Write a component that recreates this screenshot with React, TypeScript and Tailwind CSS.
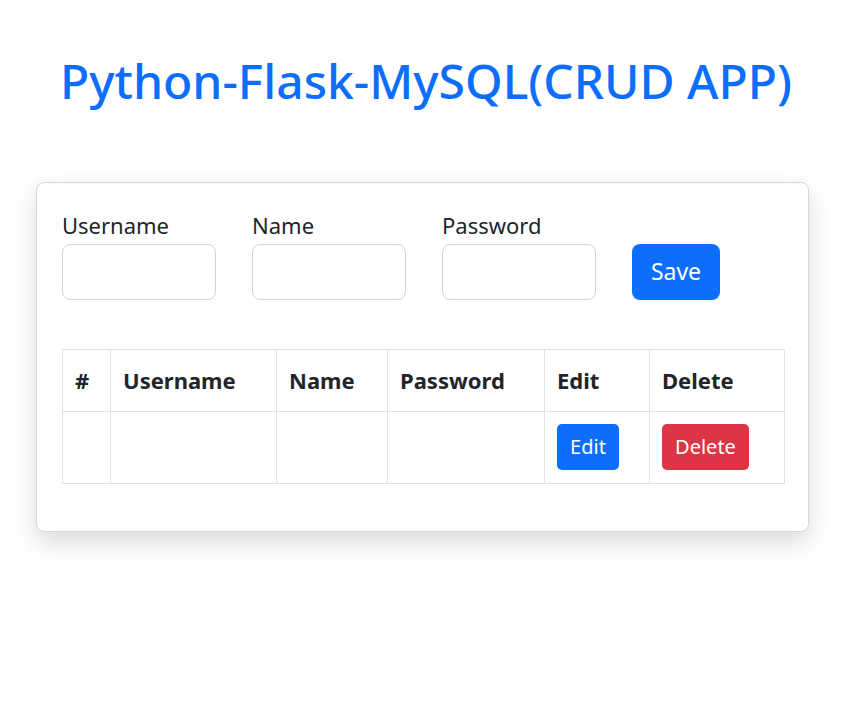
import React from "react";

export default function App() {
  const font = { fontFamily: '"Noto Sans", "Open Sans", sans-serif' };
  return (
    <div className="min-h-[709px] w-[852px] bg-white text-[#212529]" style={font}>
      <h1 className="pt-[52px] text-center text-[48px] font-medium leading-[1.2] text-[#0d6efd]">
        Python-Flask-MySQL(CRUD APP)
      </h1>
      <div className="ml-[36px] mt-[72px] h-[350px] w-[773px] rounded-[8px] border border-[#d6d6d6] bg-white px-[25px] pt-[24px] shadow-[0_10px_24px_rgba(0,0,0,0.15)]">
        <div className="flex items-end gap-[36px]">
          {["Username", "Name", "Password"].map((l) => (
            <div key={l} className="flex flex-col">
              <label className="text-[22px] leading-[37px]">{l}</label>
              <input className="h-[56px] w-[154px] rounded-[8px] border border-[#ced4da] bg-white" />
            </div>
          ))}
          <button className="h-[56px] w-[88px] rounded-[8px] bg-[#0d6efd] text-[23px] text-white">
            Save
          </button>
        </div>
        <table className="mt-[49px] w-[722px] table-fixed border-collapse">
          <colgroup>
            <col className="w-[48px]" />
            <col className="w-[166px]" />
            <col className="w-[111px]" />
            <col className="w-[157px]" />
            <col className="w-[105px]" />
            <col className="w-[135px]" />
          </colgroup>
          <thead>
            <tr className="h-[62px]">
              {["#", "Username", "Name", "Password", "Edit", "Delete"].map((h) => (
                <th
                  key={h}
                  className="border border-[#dee2e6] px-[12px] text-left text-[22px] font-bold"
                >
                  {h}
                </th>
              ))}
            </tr>
          </thead>
          <tbody>
            <tr className="h-[72px]">
              <td className="border border-[#dee2e6]"></td>
              <td className="border border-[#dee2e6]"></td>
              <td className="border border-[#dee2e6]"></td>
              <td className="border border-[#dee2e6]"></td>
              <td className="border border-[#dee2e6] px-[12px]">
                <button className="h-[46px] w-[62px] rounded-[5px] bg-[#0d6efd] text-[20px] text-white">
                  Edit
                </button>
              </td>
              <td className="border border-[#dee2e6] px-[12px]">
                <button className="h-[46px] w-[87px] rounded-[5px] bg-[#dc3545] text-[20px] text-white">
                  Delete
                </button>
              </td>
            </tr>
          </tbody>
        </table>
      </div>
    </div>
  );
}
